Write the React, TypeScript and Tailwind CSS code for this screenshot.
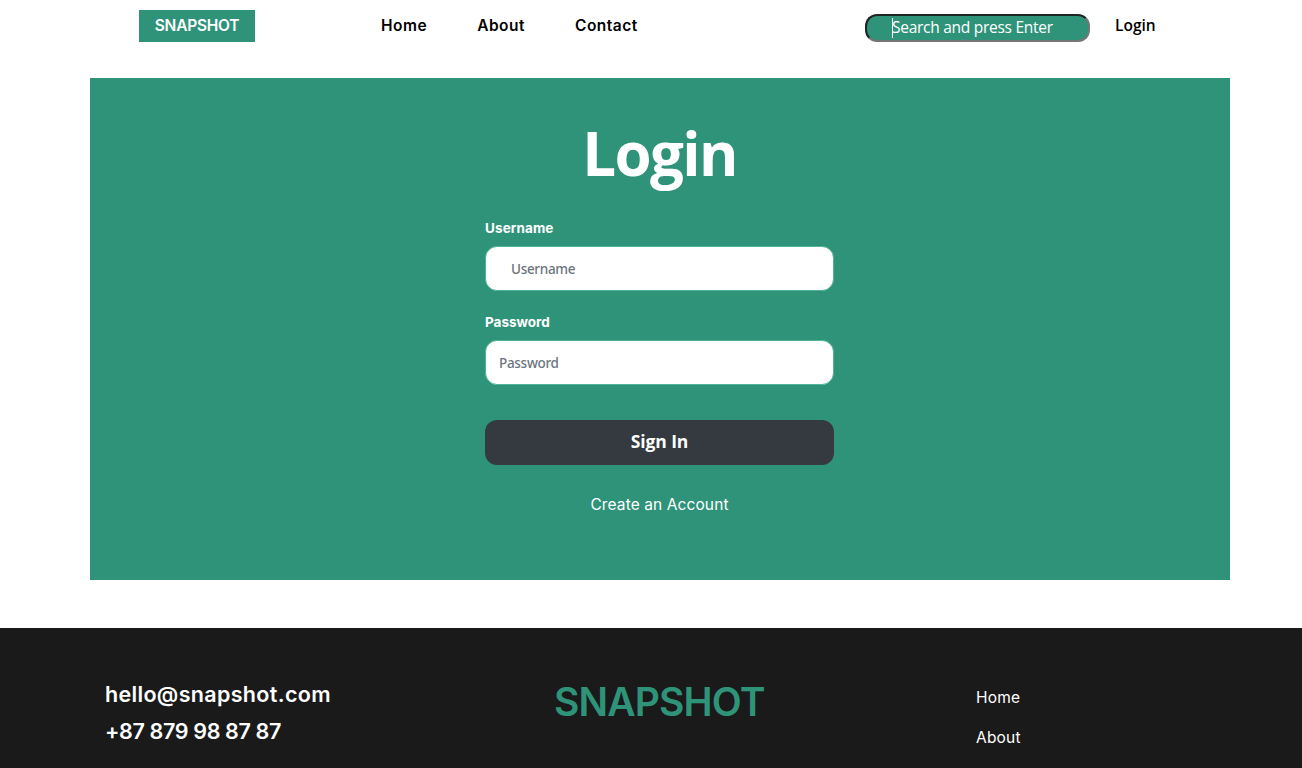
const sans = "font-['Inter',sans-serif]";
const humanist = "font-['Open_Sans',sans-serif]";

const field =
  "flex h-[45px] w-full rounded-[12px] border border-[#4fb596] bg-white pt-px font-['Noto_Sans',sans-serif] text-[13.5px] font-medium tracking-[-0.3px] text-[#6c757d] outline-none placeholder:text-[#6c757d] placeholder:opacity-100";

export default function App() {
  return (
    <div className={`h-[768px] overflow-hidden bg-white ${sans}`}>
      <header className="flex h-[78px] items-start pt-[10px] pl-[139px] text-[15.5px] font-semibold text-black">
        <a className="flex h-8 w-[116px] items-center justify-center bg-[#2f937a] tracking-[-0.25px] text-white">
          SNAPSHOT
        </a>
        <nav className="ml-[126px] flex h-8 w-[484px] items-center gap-[50px] tracking-[0.5px]">
          <a>Home</a>
          <a>About</a>
          <a>Contact</a>
        </nav>
        <div
          className={`mt-1 flex h-7 w-[225px] items-center rounded-[12px] border-2 border-t-[#1f2523] border-r-[#767676] border-b-[#767676] border-l-[#1f2523] bg-[#2f937a] pl-[25px] text-[15.5px] font-normal tracking-[-0.27px] text-white ${humanist}`}
        >
          <span className="-mr-px h-5 w-px bg-white" />
          <span>Search and press Enter</span>
        </div>
        <a className={`ml-[25px] flex h-8 items-center ${humanist}`}>Login</a>
      </header>
      <main className="ml-[90px] flex h-[502px] w-[1140px] flex-col items-center bg-[#2f937a] pt-[39px] pr-px text-white">
        <h1 className={`text-[60px] leading-[72px] font-bold tracking-[-1.6px] ${humanist}`}>Login</h1>
        <form className="mt-7 flex w-[349px] flex-col">
          <label htmlFor="username" className="text-[13.5px] leading-[22px] font-bold tracking-[0.1px]">
            Username
          </label>
          <input id="username" placeholder="Username" className={`mt-[7px] pl-[25px] ${field}`} />
          <label htmlFor="password" className="mt-5 text-[13.5px] leading-[22px] font-bold">
            Password
          </label>
          <input id="password" type="password" placeholder="Password" className={`mt-[7px] pl-[13px] ${field}`} />
          <button
            type="button"
            className={`mt-[35px] h-[45px] rounded-[12px] bg-[#343a40] pb-[2px] text-[17.5px] font-bold tracking-[-0.1px] ${humanist}`}
          >
            Sign In
          </button>
        </form>
        <a className="mt-7 text-[15.5px] leading-6 tracking-[0.1px]">Create an Account</a>
      </main>
      <footer className="mt-12 flex h-[140px] items-start bg-[#1a1a1a] pt-12 pl-[105px] text-white">
        <div className="w-[449px] text-[21.5px] leading-[37px] font-semibold">
          <p className="tracking-[0.33px]">hello@snapshot.com</p>
          <p className="tracking-[-0.36px]">+87 879 98 87 87</p>
        </div>
        <div className="w-[422px] text-[39px] leading-[52px] font-semibold tracking-[-0.85px] text-[#2f937a]">
          SNAPSHOT
        </div>
        <div className="flex flex-col gap-4 pt-[10px] text-[15.5px] leading-6 tracking-[0.2px]">
          <a>Home</a>
          <a>About</a>
        </div>
      </footer>
    </div>
  );
}
